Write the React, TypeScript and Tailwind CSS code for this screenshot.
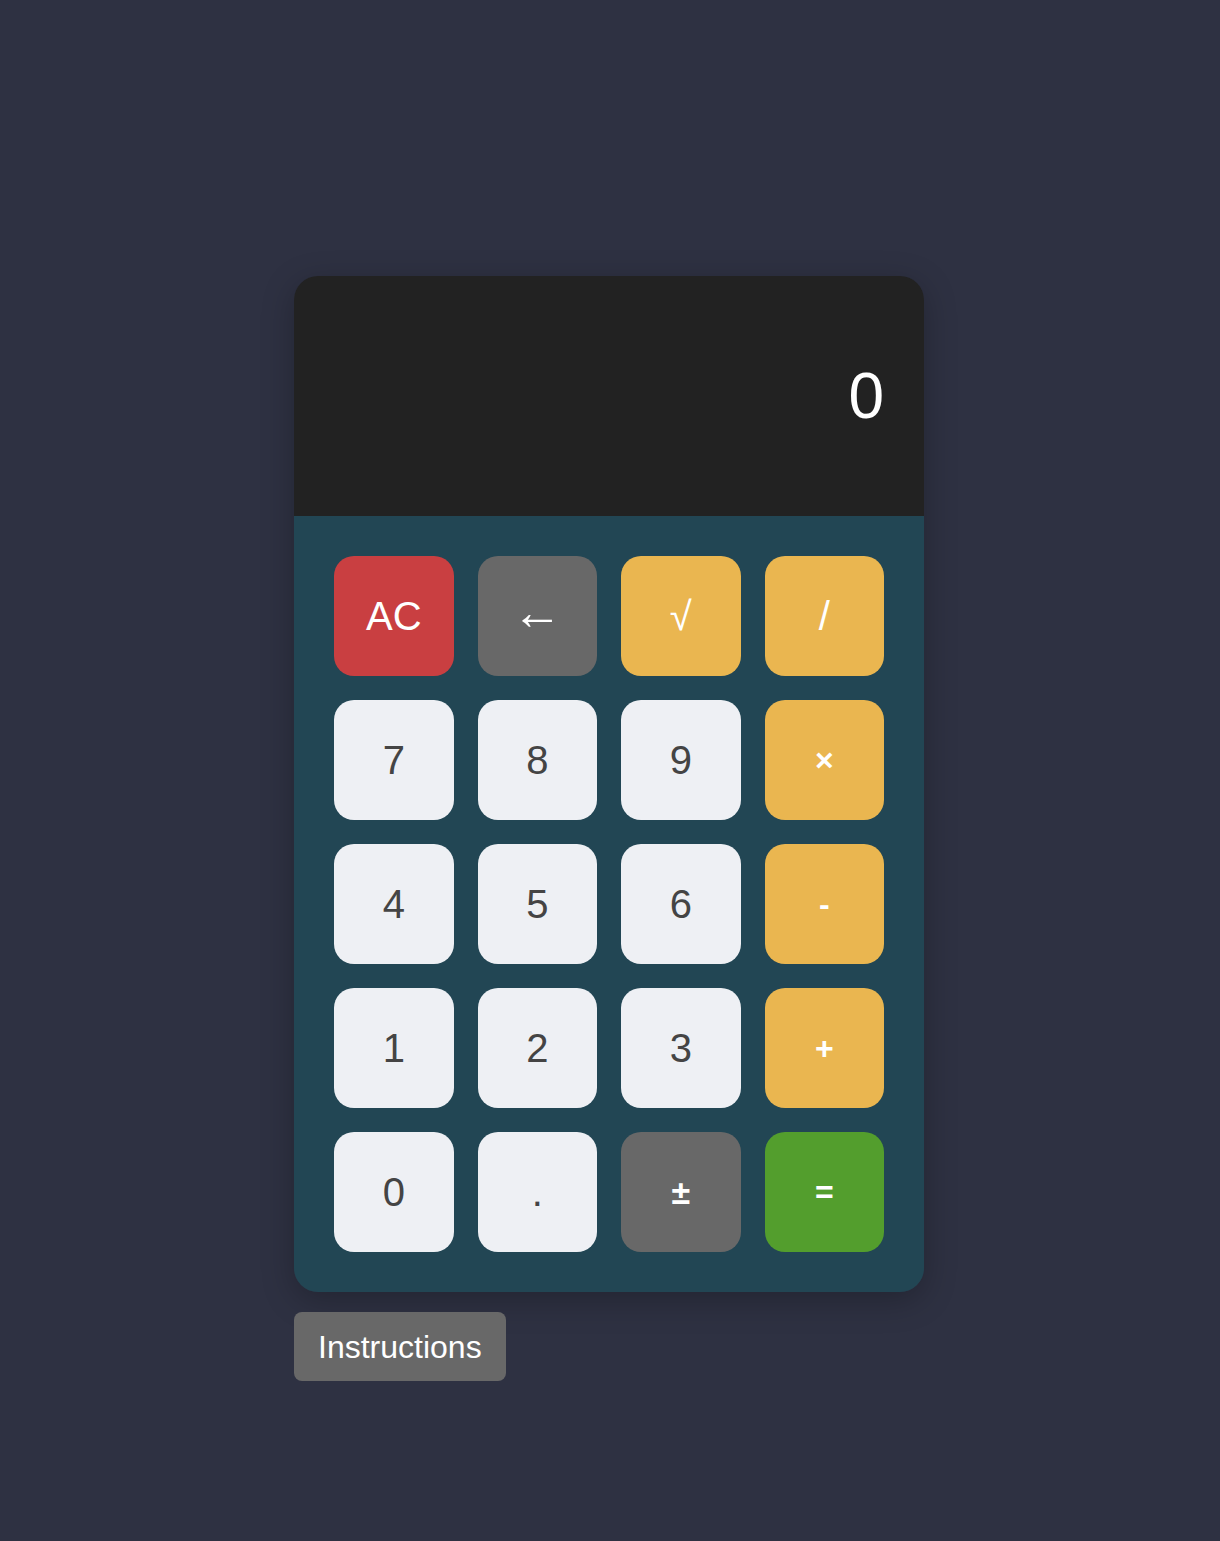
import React from 'react';

type Key = {
  label: string;
  className: string;
};

const light = 'bg-[#eef0f4] text-[#444444] text-[40px]';
const op = 'bg-[#eab650] text-white';

const keys: Key[] = [
  { label: 'AC', className: 'bg-[#c93f41] text-white text-[40px]' },
  { label: '←', className: 'bg-[#686868] text-white text-[50px] pb-2' },
  { label: '√', className: op + ' text-[40px]' },
  { label: '/', className: op + ' text-[40px]' },
  { label: '7', className: light },
  { label: '8', className: light },
  { label: '9', className: light },
  { label: '×', className: op + ' text-[32px] font-bold' },
  { label: '4', className: light },
  { label: '5', className: light },
  { label: '6', className: light },
  { label: '-', className: op + ' text-[32px] font-bold' },
  { label: '1', className: light },
  { label: '2', className: light },
  { label: '3', className: light },
  { label: '+', className: op + ' text-[32px] font-bold' },
  { label: '0', className: light },
  { label: '.', className: light },
  { label: '±', className: 'bg-[#686868] text-white text-[34px] font-bold' },
  { label: '=', className: 'bg-[#539e2d] text-white text-[32px] font-bold' },
];

const App = () => {
  return (
    <div
      className="min-h-screen bg-[#2e3142] pt-[276px] pb-[160px]"
      style={{ fontFamily: '"Liberation Sans", Arial, sans-serif' }}
    >
      <div className="w-[630px] ml-[294px]">
        <div className="rounded-3xl overflow-hidden shadow-[0_8px_32px_rgba(0,0,0,0.25)]">
          <div className="h-[240px] bg-[#222222] flex items-center justify-end px-10">
            <span className="text-white text-[64px] leading-none">0</span>
          </div>
          <div className="bg-[#224654] p-10 grid grid-cols-4 gap-6">
            {keys.map((k) => (
              <button
                key={k.label}
                className={`h-[120px] rounded-[20px] flex items-center justify-center leading-none ${k.className}`}
              >
                {k.label}
              </button>
            ))}
          </div>
        </div>
        <button className="mt-5 bg-[#686868] text-white text-[32px] rounded-lg px-6 h-[69px] leading-none">
          Instructions
        </button>
      </div>
    </div>
  );
};

export default App;
